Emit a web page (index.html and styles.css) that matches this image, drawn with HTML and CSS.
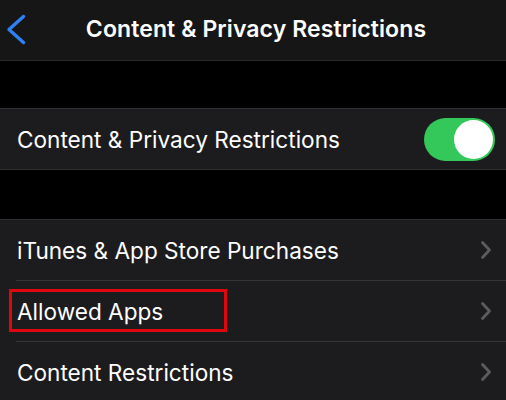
FILE: index.html
```html
<!DOCTYPE html>
<html>
<head>
<meta charset="utf-8">
<link rel="stylesheet" href="styles.css">
</head>
<body>
<div class="screen">
  <header class="nav">
    <svg class="back" width="30" height="60" viewBox="0 0 30 60"><path d="M23.5 16.5 L9 29.5 L23.5 42.5" fill="none" stroke="#2f80f5" stroke-width="3.4" stroke-linecap="round" stroke-linejoin="round"/></svg>
    <div class="title">Content &amp; Privacy Restrictions</div>
  </header>
  <div class="gap gap1"></div>
  <section class="group">
    <div class="row">
      <span class="label">Content &amp; Privacy Restrictions</span>
      <div class="switch"><div class="knob"></div></div>
    </div>
  </section>
  <div class="gap gap2"></div>
  <section class="group">
    <div class="row">
      <span class="label">iTunes &amp; App Store Purchases</span>
      <svg class="chev" width="12" height="20" viewBox="0 0 12 20"><path d="M2.5 2.5 L9.5 10 L2.5 17.5" fill="none" stroke="#5b5b60" stroke-width="2.8" stroke-linecap="round" stroke-linejoin="round"/></svg>
    </div>
    <div class="row">
      <span class="label highlighted">Allowed Apps</span>
      <svg class="chev" width="12" height="20" viewBox="0 0 12 20"><path d="M2.5 2.5 L9.5 10 L2.5 17.5" fill="none" stroke="#5b5b60" stroke-width="2.8" stroke-linecap="round" stroke-linejoin="round"/></svg>
    </div>
    <div class="row">
      <span class="label">Content Restrictions</span>
      <svg class="chev" width="12" height="20" viewBox="0 0 12 20"><path d="M2.5 2.5 L9.5 10 L2.5 17.5" fill="none" stroke="#5b5b60" stroke-width="2.8" stroke-linecap="round" stroke-linejoin="round"/></svg>
    </div>
  </section>
</div>
</body>
</html>
```
FILE: styles.css
```css
*, *::before, *::after { box-sizing: border-box; }
html, body { margin: 0; padding: 0; background: #000; }
body { font-family: "Inter", "Roboto", "Liberation Sans", sans-serif; color: #fff; }
.screen { width: 506px; height: 400px; overflow: hidden; background: #000; }
.nav {
  height: 61px;
  background: #161616;
  border-bottom: 1px solid #2a2a2c;
  display: flex;
  align-items: center;
  justify-content: center;
  position: relative;
}
.back { position: absolute; left: 0; top: 0; }
.title { font-size: 23px; font-weight: 600; letter-spacing: 0.1px; margin-top: -2px; margin-left: 6px; }
.gap1 { height: 47px; }
.gap2 { height: 49px; }
.group {
  background: #1c1c1e;
  border-top: 1px solid #2e2e30;
  border-bottom: 1px solid #2e2e30;
}
.row {
  height: 60px;
  display: flex;
  align-items: center;
  justify-content: space-between;
  padding: 0 12px 0 17px;
  position: relative;
}
.row + .row { height: 61px; padding-top: 1px; }
.row + .row::before {
  content: "";
  position: absolute;
  left: 16px; right: 0; top: 0;
  height: 1px;
  background: #343436;
}
.label { font-size: 22.6px; font-weight: 400; color: #fff; }
.highlighted { position: relative; }
.highlighted::after {
  content: "";
  position: absolute;
  left: -8px; top: -9px;
  width: 218px; height: 43px;
  border: 3px solid #e0060f;
}
.switch {
  width: 71px; height: 43px;
  border-radius: 22px;
  background: #34c759;
  padding: 2px;
  display: flex;
  justify-content: flex-end;
  margin-right: -1px;
}
.knob {
  width: 39px; height: 39px;
  border-radius: 50%;
  background: #fff;
}
.chev { margin-right: 2px; }
```
